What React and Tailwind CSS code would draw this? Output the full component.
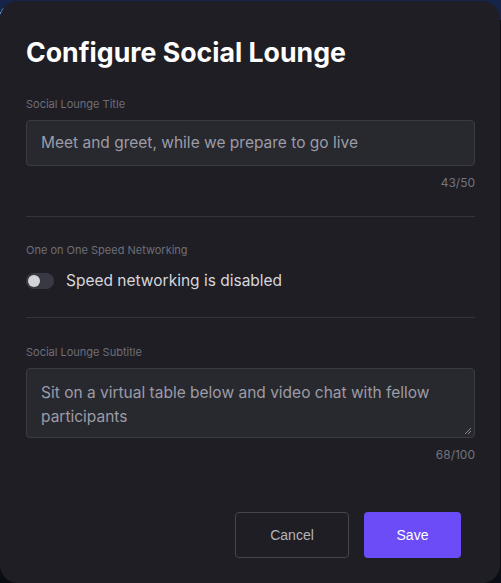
export default function App() {
  return (
    <div className="w-[501px] h-[583px] overflow-hidden bg-[#0b0d14] relative">
      {/* backdrop strip behind the modal */}
      <div className="absolute top-0 left-0 w-full h-[20px] bg-[#16244a]" />
      <div className="absolute top-[6px] left-0 text-[14px] font-bold text-[#9aa3b8] leading-none" style={{ fontFamily: "Lato, sans-serif" }}>
        €
      </div>

      <div
        className="relative mt-[1px] w-[500px] h-[582px] bg-[#1e1e24] rounded-[18px] flex flex-col px-[26px]"
        style={{ fontFamily: "Inter, 'Noto Sans', sans-serif" }}
      >
        <h1 className="mt-[35px] text-[26.7px] font-bold text-white leading-[32px]">
          Configure Social Lounge
        </h1>

        <label className="mt-[29px] text-[11px] text-[#6e6e78] leading-[14px]">Social Lounge Title</label>
        <div className="mt-[9px] w-[449px] h-[46px] rounded-[4px] border border-[#3b3b45] bg-[#28282f] flex items-center px-[14px]">
          <span className="text-[15.5px] text-[#9c9ca6]">Meet and greet, while we prepare to go live</span>
        </div>
        <div className="w-[449px] mt-[10px] text-right text-[12px] text-[#74747e] leading-[14px]">43/50</div>

        <div className="w-[449px] mt-[26px] h-px bg-[#34343c]" />

        <label className="mt-[26px] text-[11px] text-[#6e6e78] leading-[14px]">One on One Speed Networking</label>
        <div className="mt-[14px] flex items-center gap-[12px]">
          <div className="w-[28px] h-[16px] rounded-full bg-[#393944] flex items-center px-[2px]">
            <div className="w-[12px] h-[12px] rounded-full bg-[#d4d4d8]" />
          </div>
          <span className="text-[15.5px] text-[#d6d6dc] leading-[20px]">Speed networking is disabled</span>
        </div>

        <div className="w-[449px] mt-[26px] h-px bg-[#34343c]" />

        <label className="mt-[27px] text-[11px] text-[#6e6e78] leading-[14px]">Social Lounge Subtitle</label>
        <div className="mt-[9px] w-[449px] h-[70px] rounded-[4px] border border-[#3b3b45] bg-[#28282f] px-[14px] pt-[12px] relative">
          <p className="text-[15.5px] text-[#9c9ca6] leading-[24px]">
            Sit on a virtual table below and video chat with fellow participants
          </p>
          <svg className="absolute right-[2px] bottom-[2px]" width="8" height="8" viewBox="0 0 8 8">
            <path d="M7 1L1 7M7 4L4 7" stroke="#8a8a94" strokeWidth="1" />
          </svg>
        </div>
        <div className="w-[449px] mt-[10px] text-right text-[12px] text-[#74747e] leading-[14px]">68/100</div>

        <div className="mt-[50px] w-[435px] flex justify-end gap-[15px]" style={{ fontFamily: "'Liberation Sans', Arial, sans-serif" }}>
          <button className="w-[114px] h-[46px] rounded-[4px] border border-[#45454f] text-[14px] text-[#b4b4bc]">
            Cancel
          </button>
          <button className="w-[97px] h-[46px] rounded-[4px] bg-[#6b4cf6] text-[14px] text-white">
            Save
          </button>
        </div>
      </div>
    </div>
  );
}
